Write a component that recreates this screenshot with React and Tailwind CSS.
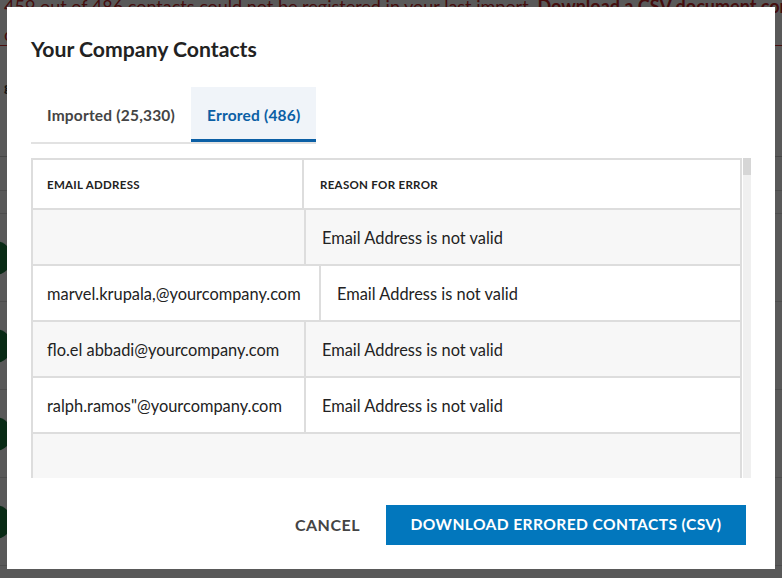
import React from 'react';

const rows = [
  { email: '', reason: 'Email Address is not valid', w: 'w-[273px]' },
  { email: 'marvel.krupala,@yourcompany.com', reason: 'Email Address is not valid', w: 'w-[288px]' },
  { email: 'flo.el abbadi@yourcompany.com', reason: 'Email Address is not valid', w: 'w-[273px]' },
  { email: 'ralph.ramos"@yourcompany.com', reason: 'Email Address is not valid', w: 'w-[273px]' },
];

const font = { fontFamily: 'Lato, "Noto Sans", sans-serif' };

const Background = () => (
  <div className="w-[782px] h-[578px] bg-white overflow-hidden" style={font}>
    <div className="h-[50px] border-b border-[#d32f2f] px-1 text-[#c62828] text-[18px] leading-[20px] -mt-[4px] whitespace-nowrap">
      <div>
        459 out of 486 contacts could not be registered in your last import.{' '}
        <span className="font-bold">Download a CSV document containing only th</span>
      </div>
      <div className="mt-[8px]">c</div>
    </div>
    <div className="pt-[30px] pl-1 text-[14px] text-[#333] font-bold">g</div>
    <div className="mt-[10px] border-b border-[#ccc] h-[50px]" />
    <div className="border-b border-[#ddd] h-[34px]" />
    <div className="border-b border-[#ddd] h-[23px]" />
    {[0, 1, 2, 3].map((i) => (
      <div key={i} className="flex items-center h-[88px] border-b border-[#ddd]">
        <div className="w-[34px] h-[34px] rounded-full bg-[#1b7a3e] -ml-[22px]" />
      </div>
    ))}
  </div>
);

const App = () => {
  return (
    <div className="relative w-[782px] h-[578px] overflow-hidden">
      <Background />
      <div className="absolute inset-0 bg-black/65" />
      <div
        className="absolute left-[7px] top-[7px] w-[768px] h-[562px] bg-white px-[24px] pt-[28px] flex flex-col"
        style={font}
      >
        <h1 className="text-[21.2px] leading-[28px] font-bold text-[#222]">Your Company Contacts</h1>

        <div className="mt-[24px] flex self-start border-b-[2px] border-[#e2e2e2]">
          <div className="h-[55px] px-[16px] pt-[3px] flex items-center text-[15.5px] font-bold text-[#444] tracking-[0.2px]">
            Imported (25,330)
          </div>
          <div className="h-[55px] px-[16px] pt-[6px] flex items-center text-[15.5px] font-bold text-[#0b5fa5] bg-[#f0f4f9] border-b-[3px] border-[#0b5fa5] -mb-[2px] tracking-[0.2px]">
            Errored (486)
          </div>
        </div>

        <div className="mt-[14px] flex h-[320px] overflow-hidden">
          <div className="w-[711px] border-[2px] border-b-0 border-[#dddddd] flex flex-col text-[#222]">
            <div className="flex h-[50px] shrink-0 border-b-[2px] border-[#dddddd] bg-white">
              <div className="w-[271px] border-r-[2px] border-[#dddddd] pl-[14px] pt-[2px] flex items-center text-[11.5px] font-bold tracking-[0.3px]">
                EMAIL ADDRESS
              </div>
              <div className="flex-1 pl-[16px] pt-[2px] flex items-center text-[11.5px] font-bold tracking-[0.3px]">
                REASON FOR ERROR
              </div>
            </div>
            {rows.map((r, i) => (
              <div
                key={i}
                className={`flex h-[56px] shrink-0 border-b-[2px] border-[#dddddd] ${i % 2 === 0 ? 'bg-[#f7f7f7]' : 'bg-white'}`}
              >
                <div className={`${r.w} shrink-0 border-r-[2px] border-[#dddddd] pl-[14px] pt-[3px] flex items-center text-[16.4px]`}>
                  {r.email}
                </div>
                <div className="flex-1 pl-[16px] pt-[3px] flex items-center text-[16.4px]">{r.reason}</div>
              </div>
            ))}
            <div className="flex-1 bg-[#f7f7f7]" />
          </div>
          <div className="w-[8px] ml-[1px] bg-[#f0f0f0] flex flex-col">
            <div className="h-[17px] bg-[#d6d6d6]" />
          </div>
        </div>

        <div className="mt-[27px] flex items-center justify-end pr-[5px] gap-[26px]">
          <button className="text-[16px] font-bold text-[#444] tracking-[0.5px]">CANCEL</button>
          <button className="w-[360px] h-[40px] bg-[#0277bd] text-white text-[15.6px] font-bold tracking-[0.4px]">
            DOWNLOAD ERRORED CONTACTS (CSV)
          </button>
        </div>
      </div>
    </div>
  );
};

export default App;
